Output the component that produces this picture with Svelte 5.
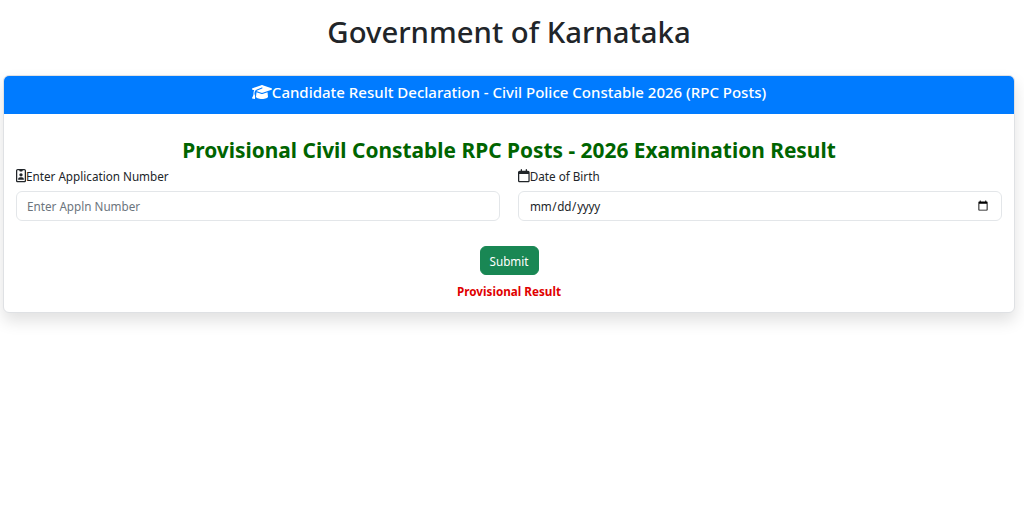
<script>
    let applno = $state('')
    let dob = $state('')
</script>

<div class="page">
    <h1>Government of Karnataka</h1>

    <div class="card">
        <div class="card-header">
            <svg class="cap" viewBox="0 0 640 512"><path fill="currentColor" d="M320 32c-8.100 0-16.100 1.400-23.700 4.100L15.800 137.400C6.300 140.900 0 149.900 0 160s6.300 19.100 15.800 22.600l57.900 20.900C57.300 229.300 48 259.800 48 291.900v28.100c0 28.400-10.800 57.700-22.300 80.800c-6.500 13-13.900 25.800-22.500 37.600C0 442.700-.9 448.300 .9 453.400s6 8.900 11.200 10.200l64 16c4.200 1.100 8.700 .3 12.400-2s6.300-6.100 7.100-10.400c8.600-42.800 4.300-81.200-2.100-108.700C90.300 344.300 86 329.800 80 316.500V291.900c0-30.200 10.200-58.700 27.900-81.500c12.900-15.500 29.600-28 49.200-35.700l157-61.700c8.200-3.200 17.500 .8 20.700 9s-.8 17.500-9 20.700l-157 61.700c-12.400 4.900-23.300 12.400-32.200 21.600l159.600 57.600c7.600 2.700 15.600 4.100 23.700 4.100s16.100-1.400 23.700-4.100L624.200 182.600c9.500-3.400 15.800-12.500 15.800-22.600s-6.300-19.100-15.800-22.600L343.700 36.100C336.100 33.400 328.100 32 320 32zM128 408c0 35.300 86 72 192 72s192-36.700 192-72L496.700 262.600 354.500 314c-11.100 4-22.800 6-34.500 6s-23.500-2-34.500-6L143.300 262.600 128 408z"/></svg>Candidate Result Declaration - Civil Police Constable 2026 (RPC Posts)
        </div>
        <div class="card-body">
            <h2>Provisional Civil Constable RPC Posts - 2026 Examination Result</h2>
            <form class="row" onsubmit={(e) => e.preventDefault()}>
                <div class="col">
                    <label for="applno">
                        <svg class="ico badge" viewBox="0 0 384 512"><path fill="currentColor" d="M256 48V64c0 17.700-14.300 32-32 32H160c-17.700 0-32-14.300-32-32V48H64c-8.800 0-16 7.200-16 16V448c0 8.800 7.200 16 16 16H320c8.800 0 16-7.200 16-16V64c0-8.800-7.200-16-16-16H256zM0 64C0 28.700 28.700 0 64 0H320c35.300 0 64 28.700 64 64V448c0 35.300-28.700 64-64 64H64c-35.300 0-64-28.700-64-64V64zM160 320h64c44.200 0 80 35.800 80 80c0 8.800-7.200 16-16 16H96c-8.800 0-16-7.200-16-16c0-44.200 35.800-80 80-80zm-32-96a64 64 0 1 1 128 0 64 64 0 1 1 -128 0z"/></svg>Enter Application Number
                    </label>
                    <input id="applno" type="text" placeholder="Enter Appln Number" bind:value={applno} />
                </div>
                <div class="col">
                    <label for="dob">
                        <svg class="ico cal" viewBox="0 0 448 512"><path fill="currentColor" d="M152 24c0-13.300-10.700-24-24-24s-24 10.700-24 24V64H64C28.700 64 0 92.700 0 128v16 48V448c0 35.300 28.700 64 64 64H384c35.300 0 64-28.700 64-64V192 144 128c0-35.300-28.700-64-64-64H344V24c0-13.300-10.700-24-24-24s-24 10.700-24 24V64H152V24zM48 192H400V448c0 8.800-7.200 16-16 16H64c-8.800 0-16-7.200-16-16V192z"/></svg>Date of Birth
                    </label>
                    <input id="dob" type="date" bind:value={dob} />
                </div>
                <div class="actions">
                    <button type="submit">Submit</button>
                </div>
            </form>
            <p class="note">Provisional Result</p>
        </div>
    </div>
</div>

<style>
    :global(body) {
        margin: 0;
        background: #fff;
        font-family: "Noto Sans", "Open Sans", sans-serif;
        color: #212529;
    }

    .page {
        padding: 0 9px 0 3px;
        width: 1024px;
        min-height: 520px;
        box-sizing: border-box;
    }

    h1 {
        margin: 0;
        padding-top: 12px;
        height: 75px;
        box-sizing: border-box;
        text-align: center;
        font-size: 29.300px;
        line-height: 40px;
        font-weight: 500;
    }

    .card {
        border: 1px solid #dfe1e4;
        border-radius: 6px;
        box-shadow: 0 8px 16px rgba(0, 0, 0, .12);
        overflow: hidden;
        background: #fff;
    }

    .card-header {
        display: flex;
        justify-content: center;
        align-items: center;
        box-sizing: border-box;
        height: 38px;
        padding-bottom: 7px;
        background: #007bff;
        color: #fff;
        font-size: 15px;
        font-weight: 500;
    }

    .cap {
        width: 20px;
        height: 16px;
    }

    .card-body {
        padding: 20px 12px 12px;
    }

    h2 {
        margin: 0;
        text-align: center;
        color: #006400;
        font-size: 20.900px;
        line-height: 32px;
        font-weight: 700;
    }

    .row {
        display: grid;
        grid-template-columns: 1fr 1fr;
        column-gap: 18px;
    }

    .col {
        display: flex;
        flex-direction: column;
    }

    label {
        display: flex;
        align-items: center;
        height: 20px;
        margin-bottom: 5px;
        font-size: 11.700px;
    }

    .ico {
        height: 13.300px;
        flex: none;
    }

    .badge {
        width: 10px;
    }

    .cal {
        width: 11.700px;
    }

    input {
        box-sizing: border-box;
        height: 30px;
        width: 100%;
        padding: 0 10px;
        border: 1px solid #e3e6e9;
        border-radius: 6px;
        background: #fff;
        color: #212529;
        font: inherit;
        font-size: 11.700px;
    }

    input[type="date"] {
        letter-spacing: -.3px;
    }

    input::placeholder {
        color: #6c757d;
    }

    .actions {
        grid-column: 1 / -1;
        display: flex;
        justify-content: center;
        margin-top: 25px;
    }

    button {
        width: 59px;
        height: 29px;
        padding: 0;
        border: 1px solid #198754;
        border-radius: 6px;
        background: #198754;
        color: #fff;
        font: inherit;
        font-size: 11.700px;
    }

    .note {
        margin: 7px 0 0;
        text-align: center;
        color: #e00000;
        font-size: 11.700px;
        line-height: 18px;
        font-weight: 700;
    }
</style>
